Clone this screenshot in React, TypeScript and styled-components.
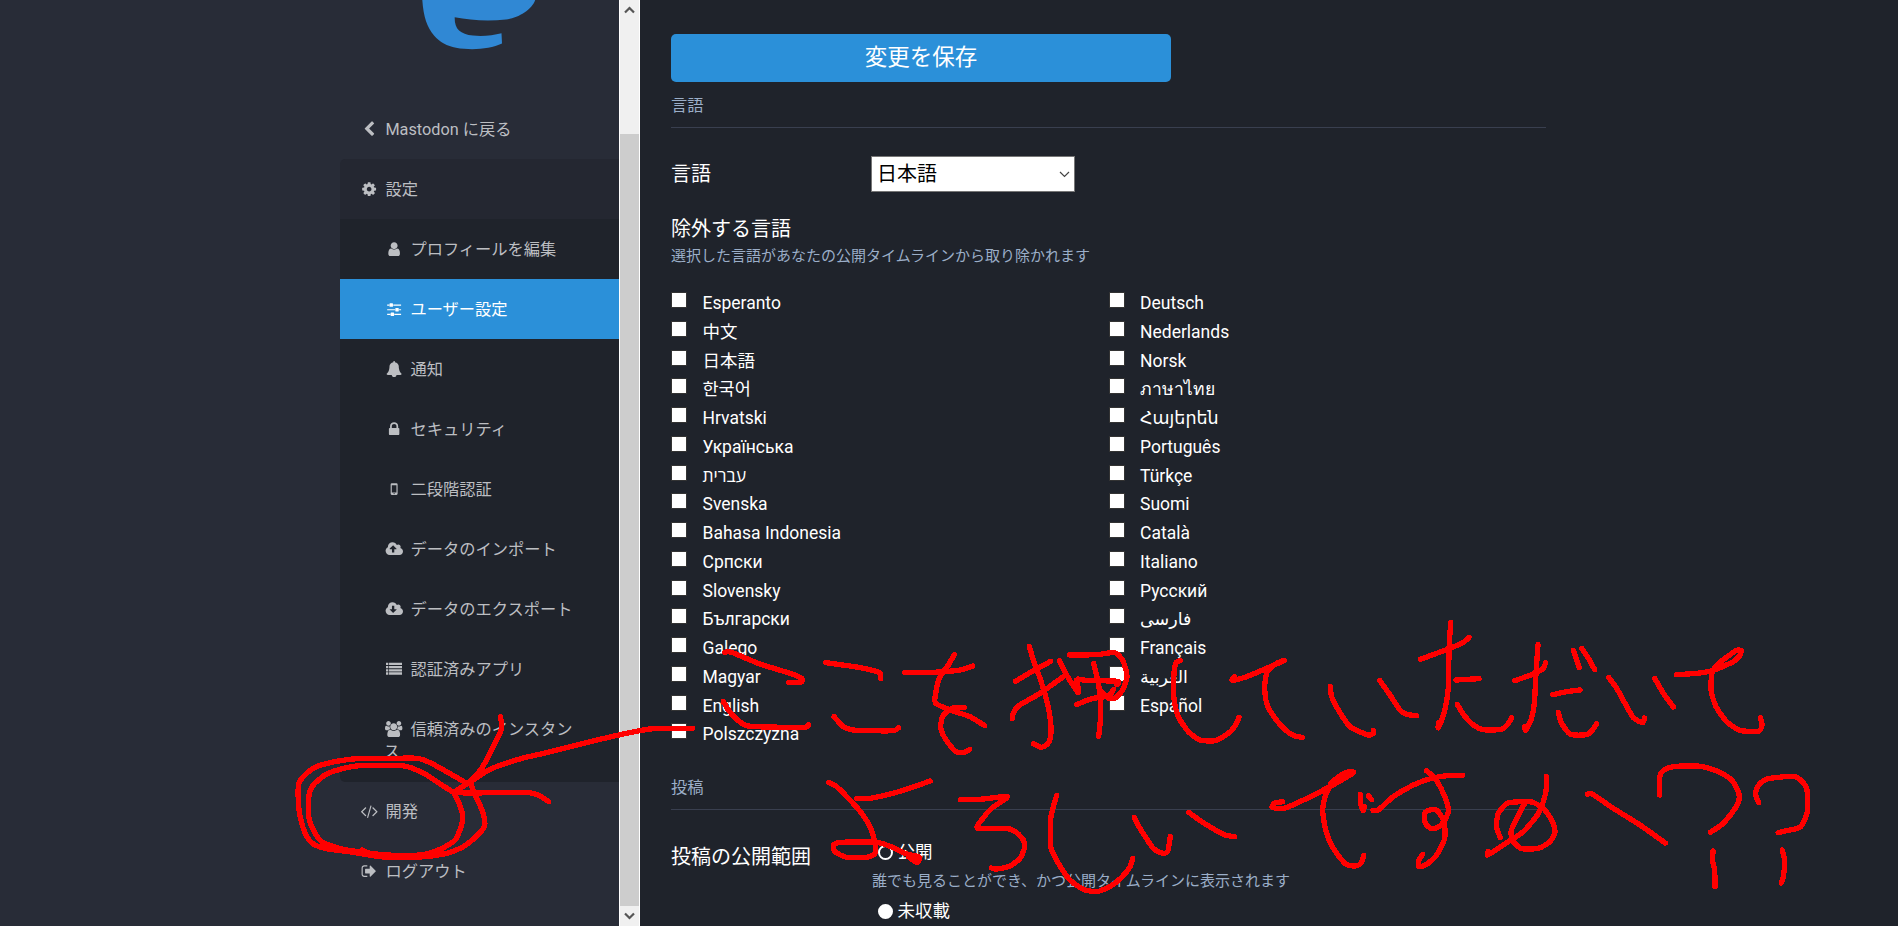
import React from "react";
import styled, { createGlobalStyle } from "styled-components";

const GlobalStyle = createGlobalStyle`
  html, body { margin: 0; padding: 0; background: #1f232b; overflow: hidden; }
  * { box-sizing: border-box; }
`;

const Page = styled.div`
  position: relative;
  display: flex;
  width: 1898px;
  height: 926px;
  overflow: hidden;
  background: #1f232b;
  color: #fff;
  font-family: Roboto, "Noto Sans CJK JP", "Open Sans", "Noto Sans", "DejaVu Sans", sans-serif;
  font-size: 16.25px;
  line-height: 22.5px;
`;

const Sidebar = styled.aside`
  width: 619px;
  flex: none;
  padding-left: 340px;
  background: #282c37;
`;

const LogoArea = styled.div`
  height: 99px;
  padding-left: 80px;
  svg { display: block; }
`;

const Menu = styled.nav`
  display: flex;
  flex-direction: column;
`;

const Submenu = styled.div`
  background: #1f232b;
  border-radius: 0 0 0 5px;
  display: flex;
  flex-direction: column;
`;

const MenuLink = styled.a<{ $sub?: boolean; $kind?: "active" | "open" }>`
  display: block;
  padding: 19.75px 35px 17.75px ${(p) => (p.$sub ? "43.75px" : "18.75px")};
  color: ${(p) => (p.$kind === "active" ? "#fff" : "#bcbec2")};
  background: ${(p) =>
    p.$kind === "active" ? "#2b90d9" : p.$kind === "open" ? "#242731" : "transparent"};
  border-radius: ${(p) => (p.$kind === "open" ? "5px 0 0 0" : "0")};
`;

const IconSlot = styled.span`
  display: inline-flex;
  justify-content: center;
  width: 20.9px;
  margin-right: 5.75px;
  vertical-align: -2px;
  svg { display: block; flex: none; height: 16.25px; fill: currentColor; }
`;

const Scrollbar = styled.div`
  width: 21px;
  flex: none;
  display: flex;
  flex-direction: column;
  justify-content: space-between;
  background: #f0f0f0;
  border: solid #fff;
  border-width: 0 1px;
`;

const ArrowButton = styled.div`
  height: 20px;
  flex: none;
  display: flex;
  align-items: center;
  justify-content: center;
`;

const Track = styled.div`
  flex: 1;
  padding-top: 114px;
`;

const Thumb = styled.div`
  height: 772px;
  background: #cdcdcd;
`;

const Content = styled.main`
  flex: 1;
  padding: 34px 0 0 31px;
`;

const Form = styled.form`
  width: 875px;
`;

const SaveButton = styled.button`
  display: block;
  width: 500px;
  height: 48px;
  padding: 0 0 2px;
  border: 0;
  border-radius: 5px;
  background: #2b90d9;
  color: #fff;
  font: inherit;
  font-size: 22.5px;
  line-height: 46px;
`;

const SectionTitle = styled.h4<{ $top: number }>`
  margin: ${(p) => p.$top}px 0 0;
  height: 33px;
  font-size: 16.25px;
  font-weight: 400;
  line-height: 22px;
  color: #9baec8;
  border-bottom: 1px solid #393f4f;
`;

const SelectRow = styled.div`
  display: flex;
  align-items: center;
  margin-top: 28px;
  height: 36px;
`;

const FieldLabel = styled.label`
  display: block;
  width: 200px;
  flex: none;
  font-size: 20px;
  line-height: 26px;
`;

const SelectBox = styled.div`
  display: flex;
  align-items: center;
  justify-content: space-between;
  width: 204px;
  height: 36px;
  padding: 0 4px 0 5px;
  background: #fff;
  border: 1px solid #767676;
  color: #000;
  font-size: 20px;
`;

const GroupLabel = styled.div`
  margin-top: 24px;
  font-size: 20px;
  line-height: 26px;
`;

const Hint = styled.span<{ $top: number }>`
  display: block;
  margin-top: ${(p) => p.$top}px;
  font-size: 15px;
  line-height: 20px;
  color: #9baec8;
`;

const LanguageColumns = styled.div`
  display: grid;
  grid-template-columns: 437.5px 437.5px;
  margin-top: 23.5px;
`;

const LanguageColumn = styled.div`
  display: flex;
  flex-direction: column;
`;

const LanguageOption = styled.label`
  display: flex;
  height: 28.75px;
  font-size: 17.5px;
  line-height: 28.75px;
  white-space: nowrap;
`;

const CheckSquare = styled.span`
  width: 16px;
  height: 16px;
  margin: 3px 15.5px 0 0;
  background: #fff;
  border: 1px solid #333;
`;

const PrivacyRow = styled.div`
  display: flex;
  margin-top: 29px;
`;

const PrivacyLabel = styled(FieldLabel)`
  padding-top: 5px;
`;

const RadioGroup = styled.div`
  padding-left: 1px;
`;

const RadioOption = styled.label<{ $top?: number }>`
  display: flex;
  align-items: center;
  margin: ${(p) => p.$top ?? 0}px 0 0 6px;
  height: 26px;
  gap: 4.5px;
  font-size: 17.5px;
`;

const RadioDot = styled.span<{ $checked?: boolean }>`
  width: 15px;
  height: 15px;
  border-radius: 50%;
  border: 2.5px solid #fff;
  background: ${(p) => (p.$checked ? "#1f232b" : "#fff")};
`;

const Ink = styled.svg`
  position: absolute;
  left: 0;
  top: 0;
  fill: none;
  stroke: #f00;
  stroke-width: 16;
  stroke-linecap: round;
  stroke-linejoin: round;
  shape-rendering: crispEdges;
  pointer-events: none;
`;

const cloud =
  "M1984 1152q0 159-112.500 271.500t-271.500 112.500h-1088q-185 0-316.500-131.500t-131.500-316.500q0-130 70-240t188-165q-2-30-2-43 0-212 150-362t362-150q156 0 285.500 87t188.500 231q71-62 166-62 106 0 181 75t75 181q0 76-41 138 130 31 213.500 135.500t83.500 238.500z";

const icons: Record<string, [number, string]> = {
  back: [1792, "M1427 301l-531 531 531 531q19 19 19 45t-19 45l-166 166q-19 19-45 19t-45-19l-742-742q-19-19-19-45t19-45l742-742q19-19 45-19t45 19l166 166q19 19 19 45t-19 45z"],
  cog: [1792, "M1152 896q0-106-75-181t-181-75-181 75-75 181 75 181 181 75 181-75 75-181zm512-109v222q0 12-8 23t-20 13l-185 28q-19 54-39 91 35 50 107 138 10 12 10 25t-9 23q-27 37-99 108t-94 71q-12 0-26-9l-138-108q-44 23-91 38-16 136-29 186-7 28-36 28h-222q-14 0-24.500-8.500t-11.500-21.500l-28-184q-49-16-90-37l-141 107q-10 9-25 9-14 0-25-11-126-114-165-168-7-10-7-23 0-12 8-23 15-21 51-66.500t54-70.500q-27-50-41-99l-183-27q-13-2-21-12.500t-8-23.500v-222q0-12 8-23t19-13l186-28q14-46 39-92-40-57-107-138-10-12-10-24 0-10 9-23 26-36 98.500-107.500t94.500-71.500q13 0 26 10l138 107q44-23 91-38 16-136 29-186 7-28 36-28h222q14 0 24.500 8.500t11.500 21.500l28 184q49 16 90 37l142-107q9-9 24-9 13 0 25 10 129 119 165 170 7 8 7 22 0 12-8 23-15 21-51 66.500t-54 70.500q26 50 41 98l183 28q13 2 21 12.500t8 23.500z"],
  user: [1792, "M1536 1399q0 109-62.500 187t-150.500 78h-854q-88 0-150.500-78t-62.500-187q0-85 8.500-160.500t31.500-152 58.500-131 94-89 134.500-34.500q131 128 313 128t313-128q76 0 134.500 34.500t94 89 58.500 131 31.500 152 8.500 160.500zm-256-887q0 159-112.500 271.500t-271.500 112.500-271.500-112.500-112.500-271.500 112.500-271.500 271.500-112.500 271.500 112.500 112.500 271.500z"],
  sliders: [1792, "M480 1408v128h-352v-128h352zm352-128q26 0 45 19t19 45v256q0 26-19 45t-45 19h-256q-26 0-45-19t-19-45v-256q0-26 19-45t45-19h256zm160-384v128h-864v-128h864zm-640-512v128h-224v-128h224zm1312 1024v128h-736v-128h736zm-960-1152q26 0 45 19t19 45v256q0 26-19 45t-45 19h-256q-26 0-45-19t-19-45v-256q0-26 19-45t45-19h256zm640 512q26 0 45 19t19 45v256q0 26-19 45t-45 19h-256q-26 0-45-19t-19-45v-256q0-26 19-45t45-19h256zm320 128v128h-224v-128h224zm0-512v128h-864v-128h864z"],
  bell: [1792, "M1728 1408q0 52-38 90t-90 38h-448q0 106-75 181t-181 75-181-75-75-181h-448q-52 0-90-38t-38-90q50-42 91-88t85-119.500 74.500-158.500 50-206 19.500-260q0-152 117-282.500t307-158.500q-8-19-8-39 0-40 28-68t68-28 68 28 28 68q0 20-8 39 190 28 307 158.500t117 282.500q0 139 19.500 260t50 206 74.500 158.500 85 119.500 91 88z"],
  lock: [1792, "M640 768h512v-192q0-106-75-181t-181-75-181 75-75 181v192zm832 96v576q0 40-28 68t-68 28h-960q-40 0-68-28t-28-68v-576q0-40 28-68t68-28h32v-192q0-184 132-316t316-132 316 132 132 316v192h32q40 0 68 28t28 68z"],
  mobile: [1792, "M640 256h512q128 0 128 128v1024q0 128-128 128h-512q-128 0-128-128v-1024q0-128 128-128zM640 480v784h512v-784zM896 1320q-64 0-64 64t64 64 64-64-64-64z"],
  upload: [2048, "M1280 864q0-14-9-23l-352-352q-9-9-23-9t-23 9l-351 351q-10 12-10 24 0 14 9 23t23 9h224v352q0 13 9.500 22.500t22.500 9.500h192q13 0 22.500-9.500t9.500-22.500v-352h224q13 0 22.500-9.500t9.500-22.500z"],
  download: [2048, "M1280 928q0-14-9-23t-23-9h-224v-352q0-13-9.500-22.500t-22.500-9.500h-192q-13 0-22.500 9.500t-9.500 22.500v352h-224q-13 0-22.500 9.500t-9.500 22.500q0 14 9 23l352 352q9 9 23 9t23-9l351-351q10-12 10-24z"],
  list: [1792, "M0 192h256v256H0zM336 192h1456v256H336zM0 544h256v256H0zM336 544h1456v256H336zM0 896h256v256H0zM336 896h1456v256H336zM0 1248h256v256H0zM336 1248h1456v256H336z"],
  users: [1920, "M593 896q-162 5-265 128h-134q-82 0-138-40.500t-56-118.500q0-353 124-353 6 0 43.500 21t97.500 42.500 119 21.500q67 0 133-23-5 37-5 66 0 139 81 256zm1071 637q0 120-73 189.500t-194 69.500h-874q-121 0-194-69.500t-73-189.500q0-53 3.500-103.500t14-109 26.500-108.500 43-97.500 62-81 85.500-53.500 111.500-20q10 0 43 21.500t73 48 107 48 135 21.500 135-21.500 107-48 73-48 43-21.500q61 0 111.500 20t85.500 53.500 62 81 43 97.500 26.500 108.500 14 109 3.500 103.500zm-1024-1277q0 106-75 181t-181 75-181-75-75-181 75-181 181-75 181 75 75 181zm704 384q0 159-112.500 271.500t-271.500 112.500-271.500-112.500-112.500-271.500 112.500-271.500 271.500-112.500 271.500 112.500 112.500 271.500zm576 225q0 78-56 118.500t-138 40.500h-134q-103-123-265-128 81-117 81-256 0-29-5-66 66 23 133 23 59 0 119-21.500t97.500-42.500 43.500-21q124 0 124 353zm-128-609q0 106-75 181t-181 75-181-75-75-181 75-181 181-75 181 75 75 181z"],
  code: [2048, "M681 1399l-50 50q-10 10-23 10t-23-10l-466-466q-10-10-10-23t10-23l466-466q10-10 23-10t23 10l50 50q10 10 10 23t-10 23l-393 393 393 393q10 10 10 23t-10 23zm591-1067l-373 1291q-4 13-15.500 19.500t-23.500 2.500l-62-17q-13-4-19.500-15.500t-2.500-24.500l373-1291q4-13 15.500-19.500t23.500-2.500l62 17q13 4 19.500 15.500t2.500 24.500zm657 651l-466 466q-10 10-23 10t-23-10l-50-50q-10-10-10-23t10-23l393-393-393-393q-10-10-10-23t10-23l50-50q10-10 23-10t23 10l466 466q10 10 10 23t-10 23z"],
  signout: [1792, "M704 1440q0 4 1 20t.5 26.500-3 23.500-10 19.500-20.500 6.500h-320q-119 0-203.500-84.500t-84.500-203.500v-704q0-119 84.500-203.500t203.500-84.500h320q13 0 22.500 9.500t9.500 22.500q0 4 1 20t.5 26.500-3 23.500-10 19.500-20.500 6.500h-320q-66 0-113 47t-47 113v704q0 66 47 113t113 47h312l11.500 1 11.500 3 8 5.500 7 9 2 13.500zm928-544q0 26-19 45l-544 544q-19 19-45 19t-45-19-19-45v-288h-448q-26 0-45-19t-19-45v-384q0-26 19-45t45-19h448v-288q0-26 19-45t45-19 45 19l544 544q19 19 19 45z"],
};

function Icon({ name }: { name: string }) {
  const [width, shape] = icons[name];
  const isCloud = name === "upload" || name === "download";
  return (
    <IconSlot>
      <svg
        viewBox={`0 0 ${width} 1792`}
        width={(16.25 * width) / 1792}
        height="16.25"
        fillRule="evenodd"
      >
        <path d={isCloud ? cloud + shape : shape} />
      </svg>
    </IconSlot>
  );
}

const settingsLinks = [
  { icon: "user", text: "プロフィールを編集" },
  { icon: "sliders", text: "ユーザー設定", active: true },
  { icon: "bell", text: "通知" },
  { icon: "lock", text: "セキュリティ" },
  { icon: "mobile", text: "二段階認証" },
  { icon: "upload", text: "データのインポート" },
  { icon: "download", text: "データのエクスポート" },
  { icon: "list", text: "認証済みアプリ" },
  { icon: "users", text: "信頼済みのインスタンス" },
];

const languages = [
  ["Esperanto", "中文", "日本語", "한국어", "Hrvatski", "Українська", "עברית", "Svenska",
    "Bahasa Indonesia", "Српски", "Slovensky", "Български", "Galego", "Magyar", "English",
    "Polszczyzna"],
  ["Deutsch", "Nederlands", "Norsk", "ภาษาไทย", "Հայերեն", "Português", "Türkçe", "Suomi",
    "Català", "Italiano", "Русский", "فارسی", "Français", "العربية", "Español"],
];

type Sketch = { x: number; y: number; strokes: number[][] };

/* Pen strokes, in thirds of a pixel from each group's origin. */
const sketches: Sketch[] = [
  {
    x: 280, y: 620,
    strokes: [
      [1238, 325, 1120, 326, 1080, 332, 1030, 342, 960, 358, 880, 378, 800, 398, 730, 414, 660, 436, 620, 453, 580, 480, 535, 508],
      [661, 290, 665, 325, 640, 380, 605, 445, 575, 480, 530, 517, 640, 518, 745, 518, 775, 525, 806, 545],
      [560, 490, 500, 455, 450, 428, 412, 415, 330, 415, 240, 415, 170, 424, 110, 440, 75, 465, 56, 492, 56, 560, 64, 605, 78, 645, 100, 672, 140, 686, 220, 697, 310, 711, 420, 711, 500, 700, 550, 680, 590, 648, 613, 620, 613, 595, 600, 555, 585, 525, 572, 490],
      [520, 517, 490, 498, 440, 465, 400, 446, 365, 437, 240, 437, 180, 448, 135, 465, 100, 495, 87, 525, 87, 595, 103, 635, 125, 665, 180, 686, 250, 697, 320, 705, 420, 705, 480, 688, 525, 660, 545, 615, 547, 580, 535, 545, 520, 515],
      [245, 690, 290, 708, 330, 711],
    ],
  },
  {
    x: 660, y: 620,
    strokes: [
      [194, 97, 215, 97, 300, 132, 390, 160, 425, 175, 423, 187, 386, 187],
      [497, 128, 590, 141, 645, 153, 662, 162, 662, 176],
      [190, 244, 205, 270, 235, 302, 270, 319, 430, 322, 445, 314],
      [522, 290, 550, 320, 580, 330, 620, 332, 700, 332, 716, 323],
      [507, 487, 530, 500, 570, 540, 605, 580, 632, 625, 645, 670, 645, 700, 620, 712, 560, 712, 525, 695, 521, 675, 545, 667, 650, 667, 700, 683, 740, 702, 777, 711, 772, 728, 745, 710],
      [590, 536, 630, 535, 720, 514, 811, 483],
    ],
  },
  {
    x: 900, y: 610,
    strokes: [
      [14, 187, 100, 187, 180, 180, 218, 168],
      [163, 134, 145, 165, 120, 200, 108, 245, 107, 280, 160, 303, 210, 320, 254, 347],
      [193, 293, 160, 294, 130, 315, 122, 350, 135, 385, 165, 423, 190, 428, 209, 418],
      [388, 109, 400, 150, 420, 205, 440, 270, 452, 335, 452, 380, 443, 402, 423, 412, 400, 401],
      [346, 214, 400, 182, 452, 154],
      [337, 326, 340, 310, 355, 288, 420, 250, 490, 200],
      [478, 152, 500, 195, 535, 248, 530, 210],
      [509, 135, 590, 134, 645, 128, 670, 155, 681, 200, 668, 240, 645, 265, 625, 264, 602, 242],
      [535, 207, 560, 211, 653, 214, 650, 224],
      [530, 284, 575, 266, 625, 258, 641, 238],
      [581, 160, 592, 205, 601, 260, 602, 320, 596, 379],
      [181, 569, 240, 568, 317, 559, 316, 567, 275, 595, 245, 630, 233, 655, 320, 655, 350, 668, 370, 690, 373, 715, 360, 745, 330, 768, 290, 777, 274, 774],
      [470, 556, 453, 620, 452, 710, 475, 760, 510, 810, 550, 838, 590, 845, 630, 830, 665, 802, 690, 770, 698, 745],
    ],
  },
  {
    x: 1060, y: 600,
    strokes: [
      [361, 181, 347, 190, 341, 235, 342, 295, 355, 350, 385, 395, 420, 420, 465, 422, 505, 400, 525, 378, 537, 352],
      [523, 230, 517, 241, 560, 230, 620, 205, 673, 181, 650, 190, 622, 215, 614, 260, 620, 310, 645, 355, 680, 393, 705, 408, 727, 412],
      [811, 259, 815, 290, 835, 330, 870, 380, 925, 405, 940, 400, 940, 391],
      [959, 241, 990, 285, 1020, 330, 1040, 343, 1070, 347],
      [223, 652, 240, 685, 280, 745, 305, 759, 323, 755, 331, 710],
      [386, 637, 430, 668, 490, 703, 524, 710],
      [668, 605, 643, 610, 637, 622, 670, 626, 720, 605, 800, 565, 880, 518, 850, 521, 820, 545, 797, 585, 788, 630, 797, 690, 820, 745, 855, 790, 885, 798, 903, 790, 911, 766],
      [868, 514, 840, 528, 813, 550, 875, 520],
      [901, 583, 902, 610, 909, 631, 914, 620],
      [925, 587, 935, 599],
    ],
  },
  {
    x: 1400, y: 600,
    strokes: [
      [61, 178, 145, 147, 190, 127, 207, 112],
      [152, 67, 147, 150, 145, 265, 132, 340, 115, 383, 116, 367],
      [168, 240, 237, 236],
      [172, 313, 190, 343, 220, 375, 250, 389, 305, 388, 325, 370, 335, 354],
      [344, 242, 390, 226, 428, 207, 437, 188],
      [414, 133, 408, 220, 403, 310, 393, 360, 377, 391, 374, 379],
      [458, 284, 500, 275, 540, 270],
      [475, 337, 485, 370, 512, 403, 560, 404, 580, 387, 590, 371],
      [520, 151, 530, 180, 538, 203], [545, 145, 565, 175, 584, 209],
      [626, 232, 650, 265, 675, 310, 700, 353, 728, 368, 733, 354],
      [764, 235, 790, 280, 820, 321],
      [829, 224, 890, 220, 940, 211, 1000, 185, 1018, 168, 1024, 152, 1008, 152, 960, 187, 937, 215, 933, 270, 948, 320, 980, 365, 1020, 391, 1075, 394, 1086, 375, 1081, 353],
      [-81, 632, -65, 630, -20, 590, 40, 555, 95, 535, 150, 526, 188, 526],
      [79, 512, 105, 535, 130, 580, 145, 625, 140, 650, 120, 678, 95, 686, 76, 670, 74, 640, 90, 630, 112, 632, 132, 665, 134, 715, 110, 765, 80, 793, 56, 800, 56, 782, 68, 763],
      [439, 529, 440, 560, 430, 605, 412, 645, 370, 695, 320, 728, 280, 755, 262, 765, 264, 754],
      [301, 713, 289, 680, 295, 640, 320, 611, 345, 606, 395, 606, 430, 625, 455, 660, 465, 695, 450, 725, 415, 745, 365, 746, 340, 725, 333, 695, 350, 655, 373, 612],
      [562, 583, 578, 583, 640, 625, 720, 675, 796, 729],
      [779, 585, 779, 530, 795, 508, 830, 499, 900, 499, 955, 515, 995, 540, 1015, 575, 1016, 605, 995, 640, 965, 674, 931, 697],
      [939, 753, 938, 785, 944, 810, 945, 860],
      [1076, 608, 1066, 580, 1078, 553, 1105, 536, 1180, 529, 1205, 543, 1221, 570, 1222, 635, 1202, 680, 1165, 691, 1134, 698],
      [1147, 750, 1154, 785, 1150, 830, 1144, 849],
    ],
  },
];

function strokePath(flat: number[]) {
  const pts: [number, number][] = [];
  for (let i = 0; i < flat.length; i += 2) pts.push([flat[i], flat[i + 1]]);
  let d = `M${pts[0][0]} ${pts[0][1]}`;
  for (let i = 0; i < pts.length - 1; i++) {
    const a = pts[i - 1] ?? pts[i];
    const b = pts[i];
    const c = pts[i + 1];
    const e = pts[i + 2] ?? c;
    const k = 9;
    d += `C${b[0] + (c[0] - a[0]) / k} ${b[1] + (c[1] - a[1]) / k} ${c[0] - (e[0] - b[0]) / k} ${c[1] - (e[1] - b[1]) / k} ${c[0]} ${c[1]}`;
  }
  return d;
}

export default function App() {
  return (
    <Page>
      <GlobalStyle />
      <Sidebar>
        <LogoArea>
          <svg width="130" height="52" viewBox="0 0 130 52" fill="#3088d4">
            <path d="M2.300 0C3.500 17 7 27 14 35.500C20 42.500 27 46 36 47.700C52 50.700 70 49 82 43.500L81.500 33.300C73 35.500 62 36.500 53 35.500C40 34 34.500 29 34.700 17.300C50 20.300 68 21.500 86 19.500C97 18.500 112 10 115.200 0Z" />
          </svg>
        </LogoArea>
        <Menu>
          <MenuLink><Icon name="back" />Mastodon に戻る</MenuLink>
          <MenuLink $kind="open"><Icon name="cog" />設定</MenuLink>
          <Submenu>
            {settingsLinks.map((l) => (
              <MenuLink key={l.text} $sub $kind={l.active ? "active" : undefined}>
                <Icon name={l.icon} />{l.text}
              </MenuLink>
            ))}
          </Submenu>
          <MenuLink><Icon name="code" />開発</MenuLink>
          <MenuLink><Icon name="signout" />ログアウト</MenuLink>
        </Menu>
      </Sidebar>
      <Scrollbar>
        <ArrowButton>
          <svg width="11" height="8" viewBox="0 0 11 8" fill="none" stroke="#555" strokeWidth="2.200">
            <path d="M1 6.500L5.500 2L10 6.500" />
          </svg>
        </ArrowButton>
        <Track><Thumb /></Track>
        <ArrowButton>
          <svg width="11" height="8" viewBox="0 0 11 8" fill="none" stroke="#555" strokeWidth="2.200">
            <path d="M1 1.500L5.500 6L10 1.500" />
          </svg>
        </ArrowButton>
      </Scrollbar>
      <Content>
        <Form>
          <SaveButton type="button">変更を保存</SaveButton>
          <SectionTitle $top={13}>言語</SectionTitle>
          <SelectRow>
            <FieldLabel>言語</FieldLabel>
            <SelectBox>
              日本語
              <svg width="11" height="7" viewBox="0 0 11 7" fill="none" stroke="#444" strokeWidth="1.200">
                <path d="M1 1L5.500 5.500L10 1" />
              </svg>
            </SelectBox>
          </SelectRow>
          <GroupLabel>除外する言語</GroupLabel>
          <Hint $top={3.5}>選択した言語があなたの公開タイムラインから取り除かれます</Hint>
          <LanguageColumns>
            {languages.map((column, i) => (
              <LanguageColumn key={i}>
                {column.map((name) => (
                  <LanguageOption key={name}><CheckSquare />{name}</LanguageOption>
                ))}
              </LanguageColumn>
            ))}
          </LanguageColumns>
          <SectionTitle $top={28}>投稿</SectionTitle>
          <PrivacyRow>
            <PrivacyLabel>投稿の公開範囲</PrivacyLabel>
            <RadioGroup>
              <RadioOption><RadioDot $checked />公開</RadioOption>
              <Hint $top={6}>誰でも見ることができ、かつ公開タイムラインに表示されます</Hint>
              <RadioOption $top={7}><RadioDot />未収載</RadioOption>
            </RadioGroup>
          </PrivacyRow>
        </Form>
      </Content>
      <Ink width="1898" height="926" viewBox="0 0 1898 926">
        {sketches.map((s) => (
          <g key={s.x} transform={`translate(${s.x} ${s.y}) scale(0.33333)`}>
            {s.strokes.map((st, i) => <path key={i} d={strokePath(st)} />)}
          </g>
        ))}
      </Ink>
    </Page>
  );
}
